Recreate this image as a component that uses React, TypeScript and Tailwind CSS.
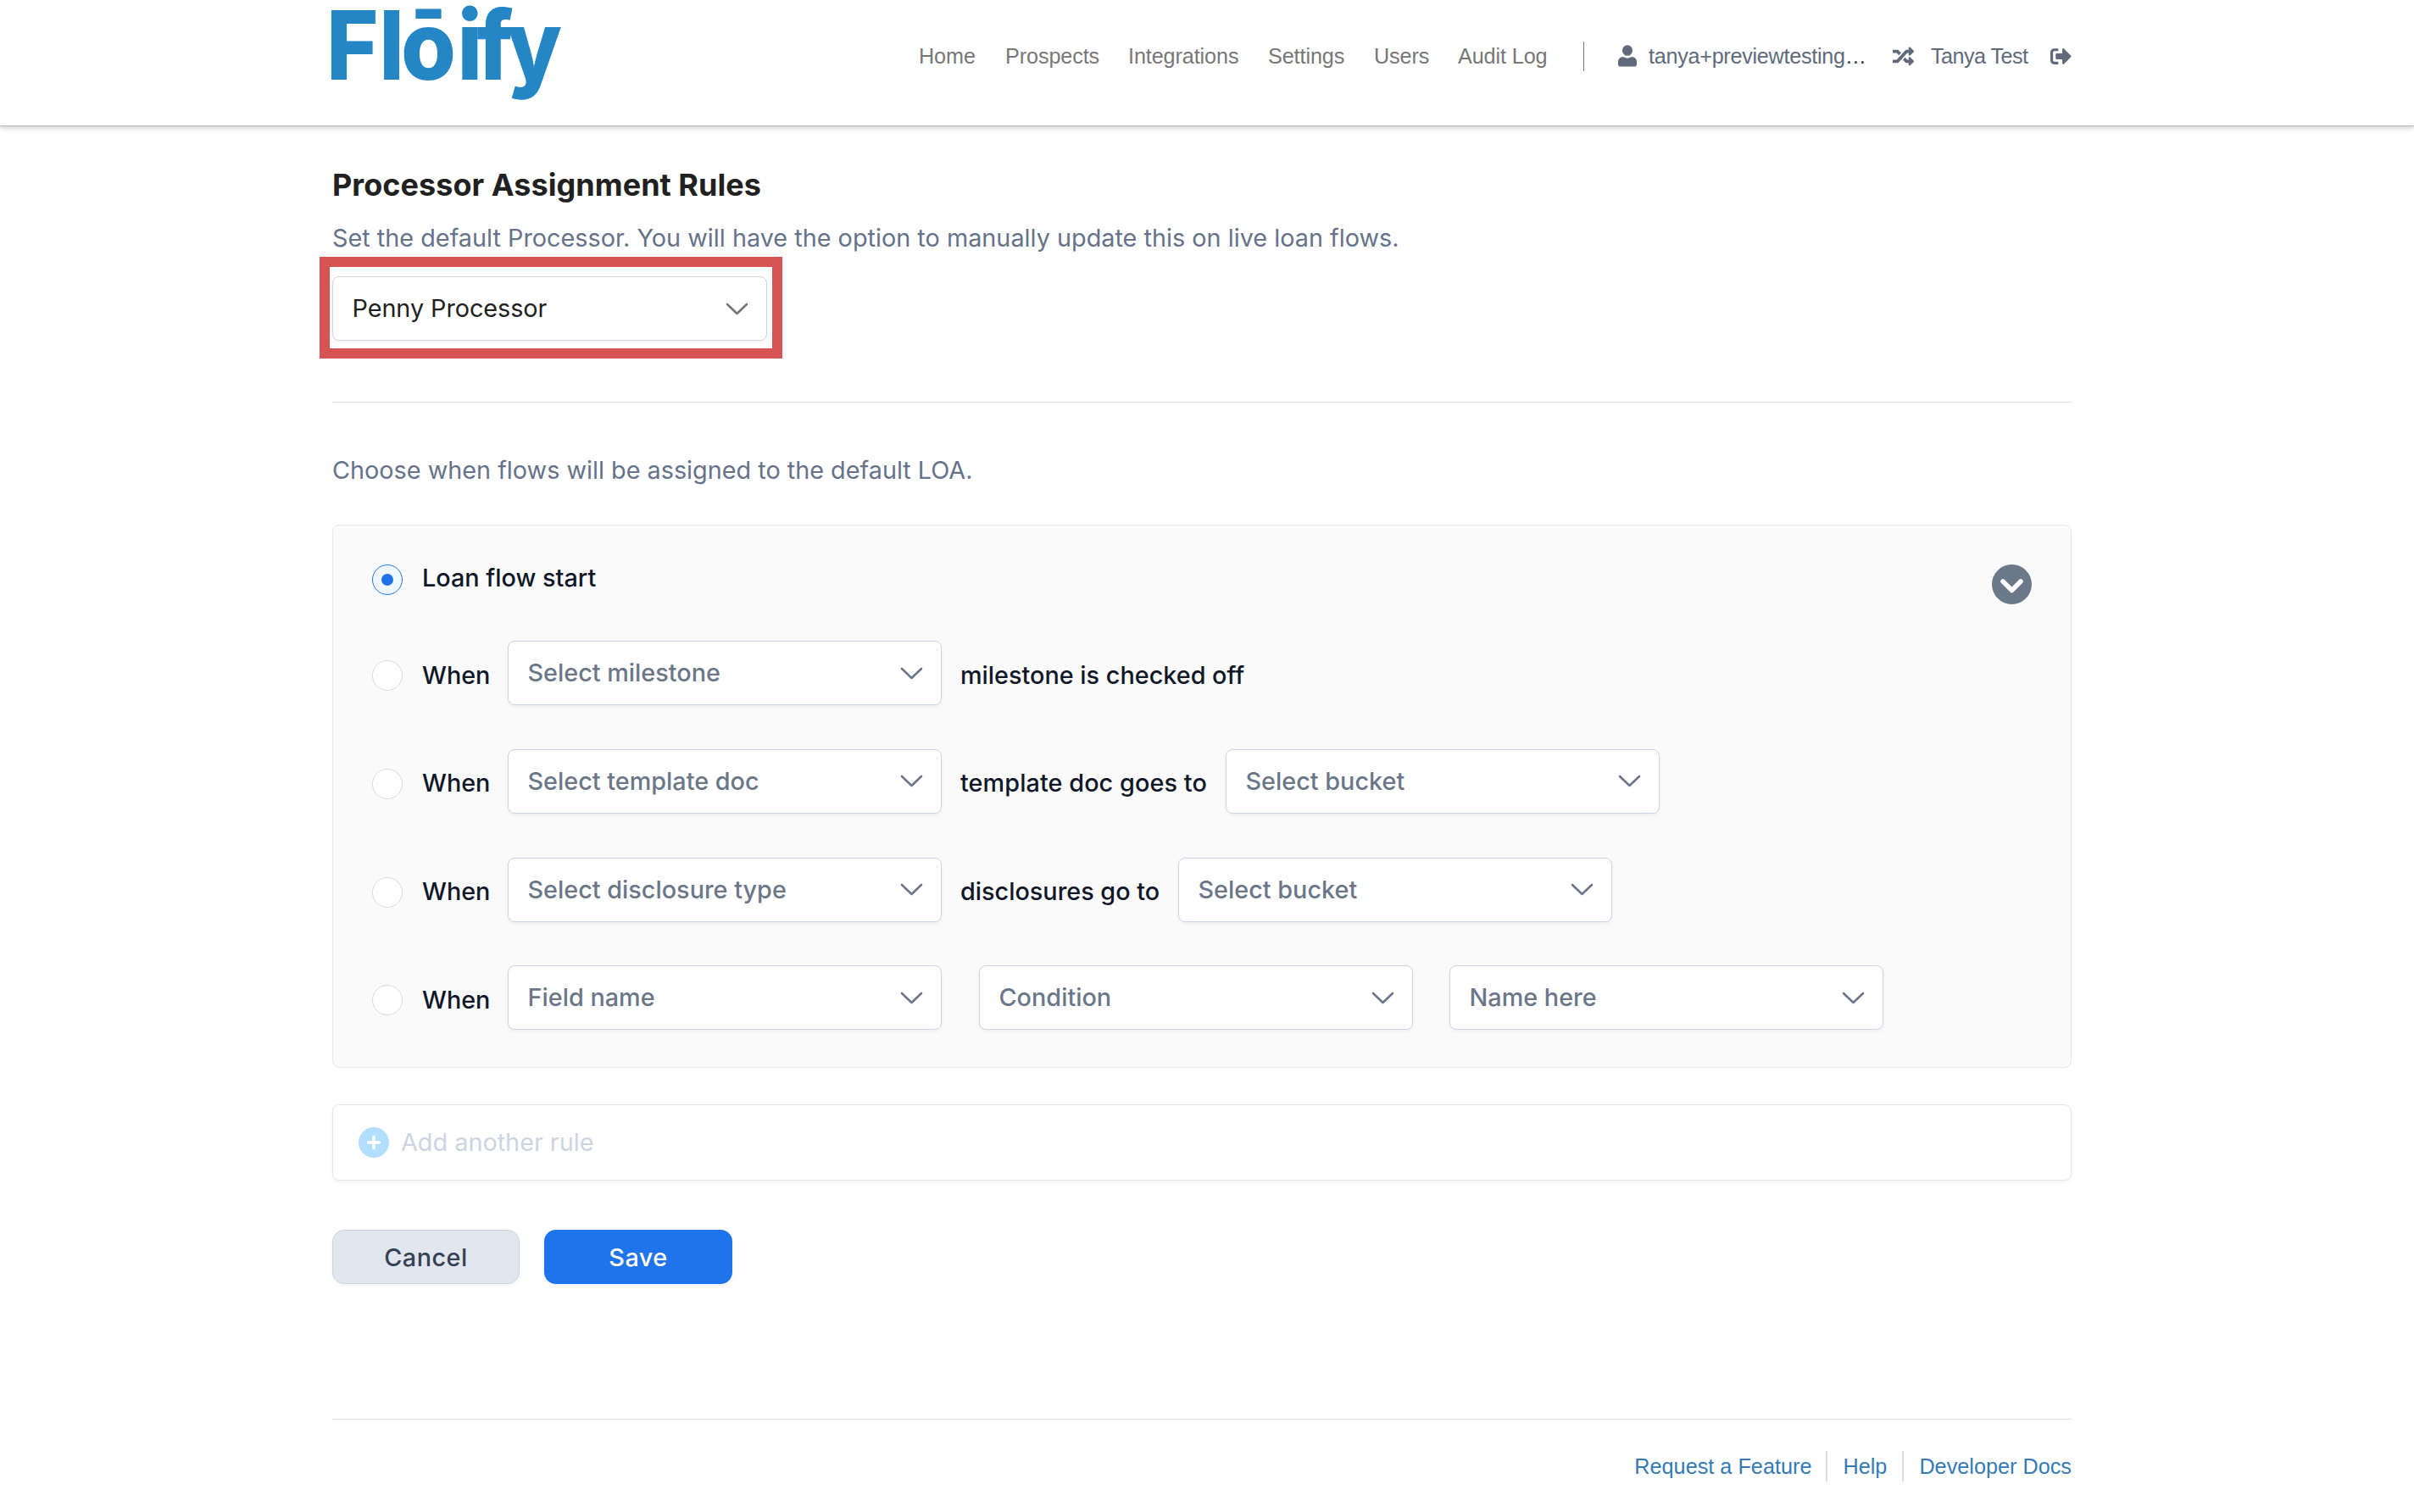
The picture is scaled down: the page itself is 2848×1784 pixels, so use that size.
import { ReactNode } from "react";
import clsx from "clsx";
import { FaRandom, FaSignOutAlt } from "react-icons/fa";

const navLinks = [
  { label: "Home", width: "w-[102px]" },
  { label: "Prospects", width: "w-[145px]" },
  { label: "Integrations", width: "w-[165px]" },
  { label: "Settings", width: "w-[125px]" },
  { label: "Users", width: "w-[99px]" },
  { label: "Audit Log", width: "w-[148px]" },
];

function Logo() {
  return (
    <svg width="268" height="130" viewBox="0 0 268 130" className="shrink-0 overflow-visible">
      <text
        transform="scale(0.93 1)"
        x="-7.5 59.5 87 158.5 183 221.5"
        y="94"
        className="fill-[#2586c5] font-['Inter',sans-serif] text-[113px] font-extrabold"
      >
        Flōify
      </text>
    </svg>
  );
}

function UserIcon() {
  return (
    <svg width="22" height="26" viewBox="0 0 22 26" fill="currentColor" className="shrink-0">
      <ellipse cx="11" cy="6.5" rx="6" ry="6.3" />
      <path d="M5 14.2h1.6a9 9 0 0 0 8.8 0H17c2.8 0 5 2.600 5 5.800v2.800c0 1.500-1 2.700-2.300 2.700H2.300C1 25.500 0 24.300 0 22.800V20c0-3.200 2.200-5.800 5-5.800z" />
    </svg>
  );
}

function Header() {
  return (
    <header className="h-[149px] border-b border-[#b8b8b8] shadow-[0_2px_6px_rgba(0,0,0,0.2)]">
      <div className="ml-[392px] flex w-[2052px] items-start font-['Liberation_Sans',Arial,sans-serif] text-[25.2px] leading-[36px]">
        <Logo />
        <nav className="ml-[424px] mt-12 flex tracking-[-0.1px] text-[#777]">
          {navLinks.map((link) => (
            <a key={link.label} className={clsx("shrink-0 whitespace-nowrap", link.width)}>
              {link.label}
            </a>
          ))}
        </nav>
        <div className="mt-12 flex h-9 items-center text-[#606a7b]">
          <div className="h-[35px] w-px bg-[#777]" />
          <div className="ml-[40px] flex">
            <UserIcon />
          </div>
          <span className="ml-[14px] w-[288px] whitespace-nowrap tracking-[-0.28px]">
            tanya+previewtesting<span className="text-[#333]">…</span>
          </span>
          <FaRandom className="h-[25px] w-[25px] shrink-0" />
          <span className="ml-[20px] w-[141px] whitespace-nowrap tracking-[-0.55px]">Tanya Test</span>
          <FaSignOutAlt className="h-[25px] w-[25px] shrink-0" />
        </div>
      </div>
    </header>
  );
}

interface SelectProps {
  value: string;
  filled?: boolean;
  className?: string;
}

function Select({ value, filled, className }: SelectProps) {
  return (
    <div
      className={clsx(
        "flex h-[76px] w-[512px] shrink-0 items-center justify-between rounded-[8px] border border-[#cbd5e1] bg-white pl-[22.5px] pr-[21px] shadow-[0_2px_4px_rgba(0,0,0,0.05)]",
        filled ? "tracking-[-0.06px] text-[#212121]" : "font-medium text-[#6b7789]",
        className
      )}
    >
      <span className="whitespace-nowrap">{value}</span>
      <svg
        width="27"
        height="15"
        viewBox="0 0 27 15"
        fill="none"
        strokeWidth="2.6"
        strokeLinecap="round"
        strokeLinejoin="round"
        className={filled ? "stroke-[#757575]" : "stroke-[#6b7789]"}
      >
        <path d="M2 2l11.500 11L25 2" />
      </svg>
    </div>
  );
}

function Radio({ checked, className }: { checked?: boolean; className?: string }) {
  return (
    <div
      className={clsx(
        "flex size-9 shrink-0 items-center justify-center rounded-full border",
        checked ? "border-[#2074eb] bg-[#eff8ff]" : "border-[#d3dae4] bg-white",
        className
      )}
    >
      {checked && <div className="size-[14px] rounded-full bg-[#2074eb]" />}
    </div>
  );
}

function RuleRow({ children }: { children: ReactNode }) {
  return (
    <div className="flex items-center">
      <Radio className="mt-1.5" />
      <span className="ml-[23px] mt-[5px] w-[101px]">When</span>
      {children}
    </div>
  );
}

function RuleText({ children, className }: { children: ReactNode; className?: string }) {
  return <span className={clsx("ml-[22px] mt-[5px] shrink-0 whitespace-nowrap", className)}>{children}</span>;
}

function RulesPanel() {
  return (
    <section className="mt-[42px] flex h-[641px] flex-col rounded-[8px] border border-[#e6e8ea] bg-[#fafafa] px-[46px] pt-[46px] font-medium text-[#0f1728]">
      <div className="flex h-12 items-start">
        <Radio checked />
        <span className="ml-[23px] flex-1 leading-[32px]">Loan flow start</span>
        <svg width="48" height="48" viewBox="0 0 48 48" fill="none">
          <circle cx="24.500" cy="23.500" r="23.500" fill="#6b7888" />
          <path d="M14 20l10.500 10.500L35 20" stroke="#fff" strokeWidth="5.500" strokeLinecap="round" strokeLinejoin="round" />
        </svg>
      </div>
      <div className="mt-[42px] flex flex-col gap-[51.8px]">
        <RuleRow>
          <Select value="Select milestone" />
          <RuleText>milestone is checked off</RuleText>
        </RuleRow>
        <RuleRow>
          <Select value="Select template doc" />
          <RuleText className="w-[313px] tracking-[0.08px]">template doc goes to</RuleText>
          <Select value="Select bucket" />
        </RuleRow>
        <RuleRow>
          <Select value="Select disclosure type" />
          <RuleText className="w-[257px]">disclosures go to</RuleText>
          <Select value="Select bucket" />
        </RuleRow>
        <RuleRow>
          <Select value="Field name" />
          <Select value="Condition" className="ml-[44px]" />
          <Select value="Name here" className="ml-[43px]" />
        </RuleRow>
      </div>
    </section>
  );
}

function Footer() {
  return (
    <footer className="mt-[159px] border-t border-[#e0e0e0] pt-[37px] font-['Liberation_Sans',Arial,sans-serif] text-[25.2px] leading-[36px] tracking-[0.03px] text-[#337ab7]">
      <div className="flex justify-end">
        <a className="pr-[17px]">Request a Feature</a>
        <a className="border-l-2 border-[#ddd] px-[18px]">Help</a>
        <a className="border-l-2 border-[#ddd] pl-[18px]">Developer Docs</a>
      </div>
    </footer>
  );
}

export default function App() {
  return (
    <div className="h-[1784px] w-[2848px] bg-white">
      <Header />
      <main className="ml-[392px] w-[2052px] pt-[45px] font-['Inter',sans-serif] text-[28.8px] leading-[44px]">
        <h1 className="text-[36px] font-bold leading-[48px] tracking-[0.04px] text-[#212121]">
          Processor Assignment Rules
        </h1>
        <p className="mt-[17px] tracking-[0.01px] text-[#66728a]">
          Set the default Processor. You will have the option to manually update this on live loan flows.
        </p>

        {/* Highlighted default processor */}
        <div className="relative mt-[23px] w-[513px]">
          <Select value="Penny Processor" filled className="w-full" />
          <div className="absolute -left-[15px] -top-[23px] h-[120px] w-[546px] border-[12px] border-[#d65453]" />
        </div>

        <hr className="mt-[72px] border-t border-[#dcdfe2]" />
        <p className="mt-[58px] text-[#66728a]">Choose when flows will be assigned to the default LOA.</p>

        <RulesPanel />

        {/* Add rule */}
        <div className="mt-[43px] flex h-[90px] items-center rounded-[8px] border border-[#e1e6ee] bg-white pl-[30px] text-[#cbd5e1] shadow-[0_2px_4px_rgba(0,0,0,0.05)]">
          <svg width="36" height="36" viewBox="0 0 36 36" fill="none">
            <circle cx="18" cy="18" r="18" fill="#b2deff" />
            <path d="M11.500 18h13M18 11.500v13" stroke="#fff" strokeWidth="3.600" strokeLinecap="round" />
          </svg>
          <span className="ml-[14px]">Add another rule</span>
        </div>

        <div className="mt-[58px] flex gap-[29px] font-medium">
          <button className="h-16 w-[221px] rounded-[14px] border border-[#cbd5e1] bg-[#e2e6ee] pt-px tracking-[0.5px] text-[#364254] shadow-[0_2px_4px_rgba(0,0,0,0.05)]">
            Cancel
          </button>
          <button className="h-16 w-[222px] rounded-[14px] bg-[#2074eb] pt-px tracking-[0.5px] text-white shadow-[0_2px_4px_rgba(0,0,0,0.05)]">
            Save
          </button>
        </div>

        <Footer />
      </main>
    </div>
  );
}
